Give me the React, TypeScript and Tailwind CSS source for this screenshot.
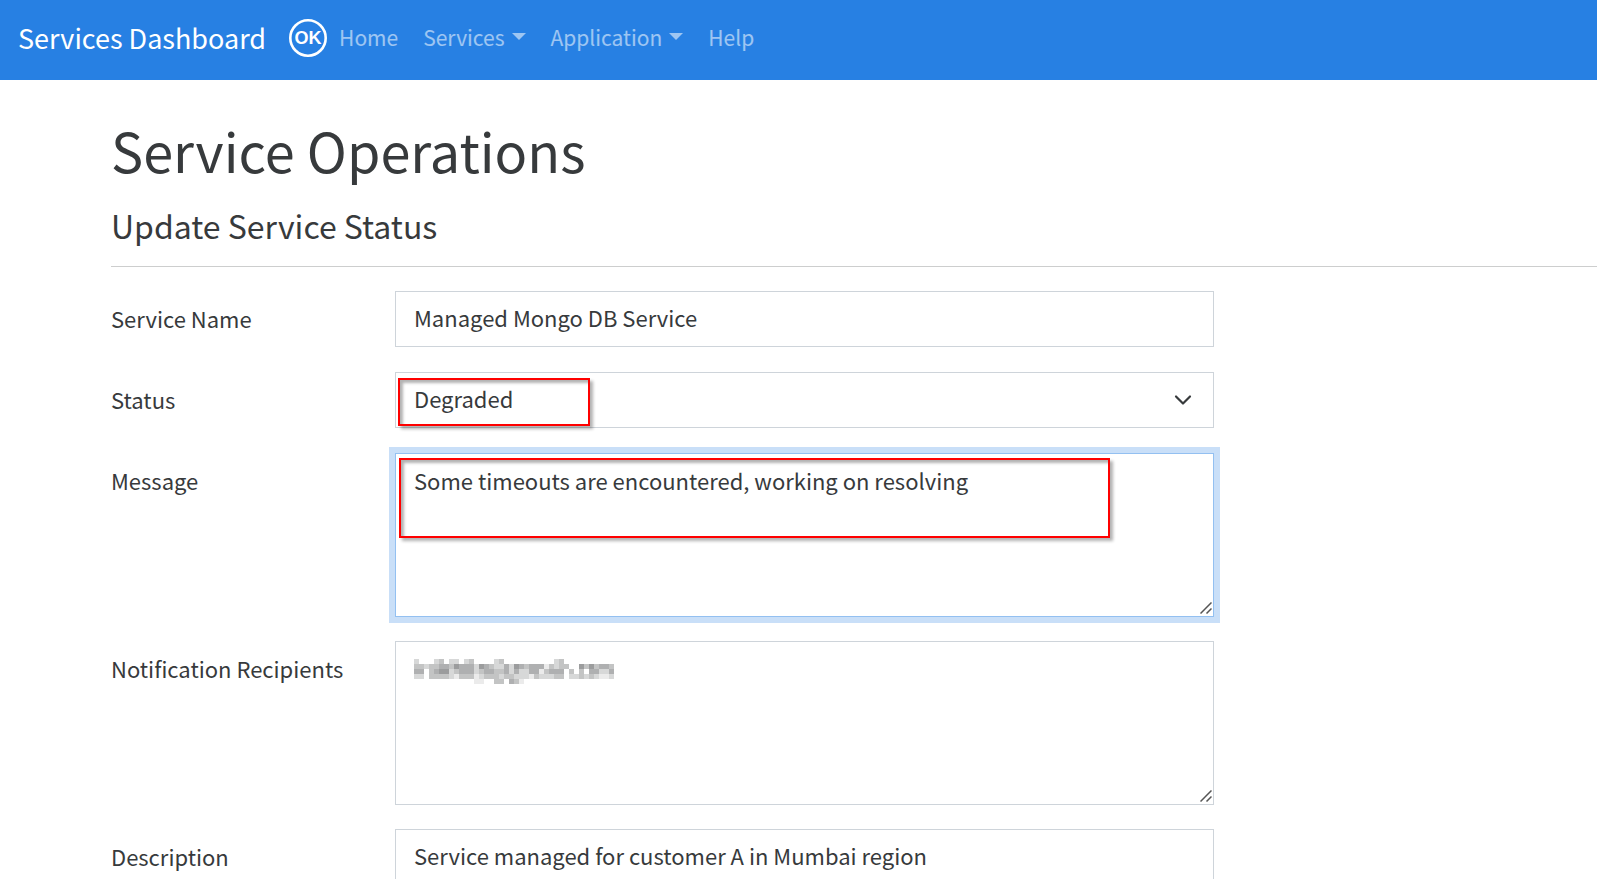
import React from 'react';

const links = [
  { label: 'Home', caret: false },
  { label: 'Services', caret: true },
  { label: 'Application', caret: true },
  { label: 'Help', caret: false },
];

const field = 'block w-full rounded-none border bg-white px-[18px] text-[#373a3c] outline-none';
const marker = 'pointer-events-none absolute border-2 border-[#ff0000] shadow-[3px_3px_3px_rgba(0,0,0,0.3),inset_3px_3px_3px_rgba(0,0,0,0.3)]';

// one digit per 5px block, 0 = white, 9 = darkest
const mosaic = [
  '2000230220230000230000000000230000000000',
  '3323344354442543224254344413233005353443',
  '4403455234442344334242244134440303044224',
  '2203333213331233323322213222330223232112',
  '0000000000001100330431000000000000000000',
];

const Redacted = () => (
  <svg width="200" height="25" viewBox="0 0 200 25" shapeRendering="crispEdges" aria-hidden="true">
    {mosaic.map((row, y) =>
      row.split('').map((c, x) =>
        c === '0' ? null : <rect key={`${x}-${y}`} x={x * 5} y={y * 5} width="5" height="5" fill="#373a3c" opacity={Number(c) / 10} />
      )
    )}
  </svg>
);

const Grip = () => (
  <svg className="pointer-events-none absolute bottom-[3px] right-[2px] h-3 w-3" viewBox="0 0 12 12" stroke="#555" strokeWidth="1.5" aria-hidden="true">
    <path d="M0.5 11.5l11-11M6.5 11.5l5-5" />
  </svg>
);

const Navbar = () => (
  <nav className="flex h-20 items-center bg-[#2780e3] px-[18px] pb-1">
    <a href="#" className="mr-[23px] whitespace-nowrap text-[27px] leading-10 text-white">Services Dashboard</a>
    <svg className="mr-3 h-[38px] w-[38px] shrink-0" viewBox="0 0 38 38" aria-label="OK">
      <circle cx="19" cy="19" r="17.7" fill="none" stroke="#fff" strokeWidth="2.6" />
      <text x="19" y="25" textAnchor="middle" fontFamily="Liberation Sans, sans-serif" fontWeight="700" fontSize="18" fill="#fff">OK</text>
    </svg>
    <ul className="flex gap-[25px] pb-[3px]">
      {links.map((link) => (
        <li key={link.label}>
          <a href="#" className="flex items-center text-[21px] leading-9 text-white/55">
            {link.label}
            {link.caret && (
              <svg className="ml-[7px] h-[7px] w-[14px]" viewBox="0 0 14 7">
                <path d="M0 0h14L7 7z" fill="currentColor" />
              </svg>
            )}
          </a>
        </li>
      ))}
    </ul>
  </nav>
);

const Row = ({ id, label, children }: { id: string; label: string; children: React.ReactNode }) => (
  <div className="grid min-h-[57px] grid-cols-[284px_minmax(0,819px)]">
    <label htmlFor={id} className="pt-[9px] leading-9">{label}</label>
    <div className="relative">{children}</div>
  </div>
);

const App = () => {
  return (
    <div className="min-h-screen bg-white font-['Noto_Sans_CJK_JP','Source_Sans_Pro',sans-serif] text-[22px] text-[#373a3c]">
      <Navbar />
      <main className="pl-[111px] pt-9">
        <h1 className="mb-4 text-[54px] leading-[68px]">Service Operations</h1>
        <h2 className="mb-4 text-[32px] leading-[50px]">Update Service Status</h2>
        <hr className="mb-6 border-[#cdcece]" />
        <form className="flex flex-col gap-6">
          <Row id="name" label="Service Name">
            <input id="name" type="text" defaultValue="Managed Mongo DB Service" className={`${field} h-14 border-[#ced4da] pb-1`} />
          </Row>
          <Row id="status" label="Status">
            <select id="status" className={`${field} h-14 appearance-none border-[#ced4da] pb-[3px]`}>
              <option>Degraded</option>
              <option>Available</option>
            </select>
            <svg className="pointer-events-none absolute right-[22px] top-5 h-4 w-[18px]" viewBox="0 0 18 16" fill="none">
              <path d="M2 4.5l7 7 7-7" stroke="#373a3c" strokeWidth="2.2" strokeLinecap="round" strokeLinejoin="round" />
            </svg>
            <div className={`${marker} left-[3px] top-[6px] h-12 w-48`} />
          </Row>
          <Row id="message" label="Message">
            <textarea
              id="message"
              defaultValue="Some timeouts are encountered, working on resolving"
              className={`${field} h-[164px] resize-none border-[#93c0f1] py-2 leading-9 ring-6 ring-[#c9dff8]`}
            />
            <Grip />
            <div className={`${marker} left-1 top-[5px] h-20 w-[711px]`} />
          </Row>
          <Row id="recipients" label="Notification Recipients">
            <textarea id="recipients" className={`${field} h-[164px] resize-none border-[#ced4da] py-2 leading-9`} />
            <Grip />
            <div className="pointer-events-none absolute left-[19px] top-[18px]">
              <Redacted />
            </div>
          </Row>
          <Row id="description" label="Description">
            <input id="description" type="text" defaultValue="Service managed for customer A in Mumbai region" className={`${field} h-14 border-[#ced4da] pb-1`} />
          </Row>
        </form>
      </main>
    </div>
  );
};

export default App;
